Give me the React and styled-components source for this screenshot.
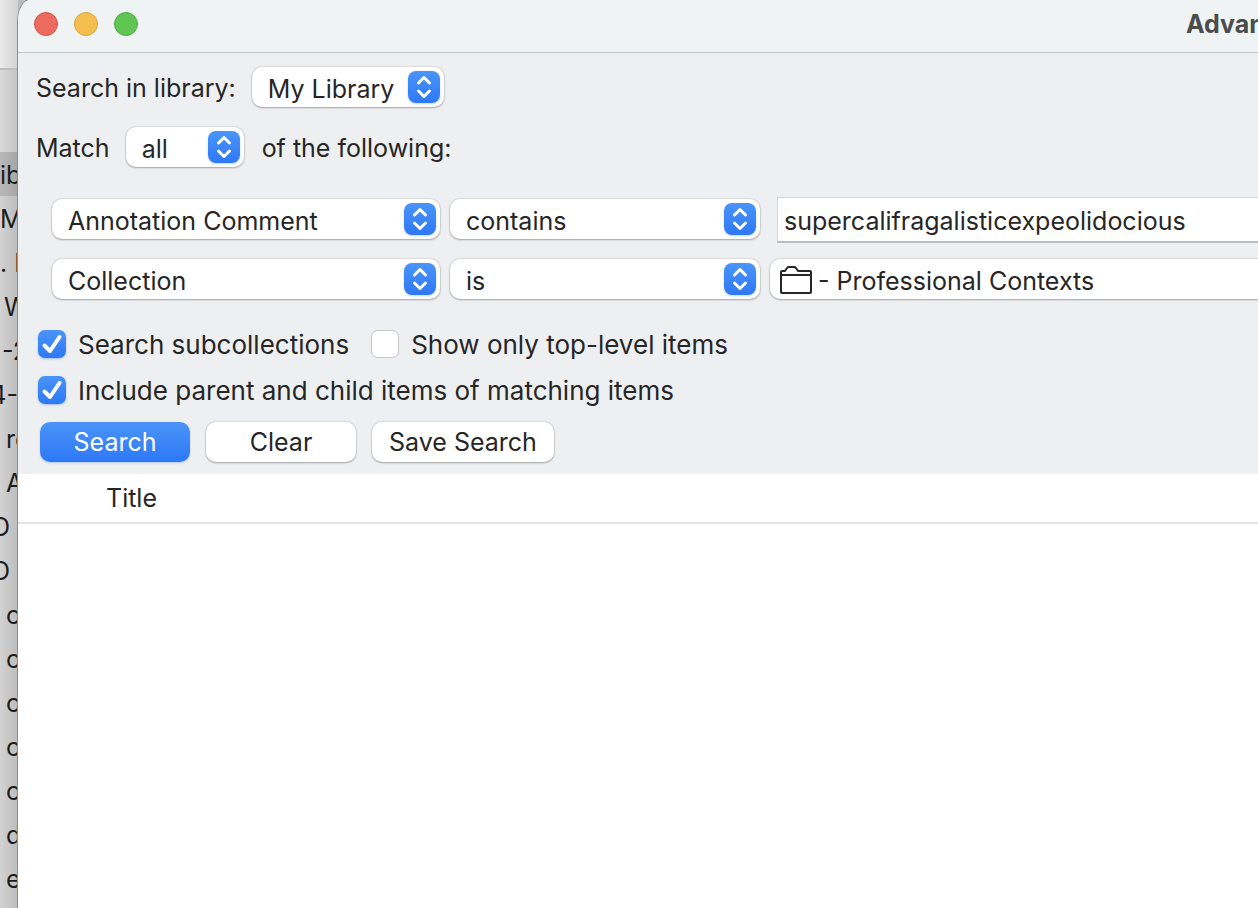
import React, {useState} from 'react'
import styled, {createGlobalStyle} from 'styled-components'

const backRows = [
    {text: 'ib', indent: 0, selected: true},
    {text: 'M', indent: 0},
    {text: '. I', indent: 0},
    {text: 'W', indent: 4},
    {text: '-2', indent: 2},
    {text: '4-', indent: 0, end: true},
    {text: 're', indent: 6},
    {text: 'A', indent: 6},
    {text: 'D', indent: 8, end: true},
    {text: 'D', indent: 8, end: true},
    {text: 'c', indent: 6},
    {text: 'c', indent: 6},
    {text: 'c', indent: 6},
    {text: 'c', indent: 6},
    {text: 'c', indent: 6},
    {text: 'd', indent: 6},
    {text: 'e', indent: 6},
]

const Popup = ({label, options, width, icon, cut}) => (
    <PopupTag $width={width}>
        <PopupSelect aria-label={label} $icon={Boolean(icon)} $cut={cut}>
            {options.map(option => <option key={option}>{option}</option>)}
        </PopupSelect>
        {icon}
        {!cut && (
            <Stepper>
                <svg width="32" height="32" viewBox="0 0 32 32" fill="none" stroke="#fff"
                     strokeWidth="3" strokeLinecap="round" strokeLinejoin="round">
                    <path d="M10.500 12L16 6.500L21.500 12M10.500 20L16 25.500L21.500 20"/>
                </svg>
            </Stepper>
        )}
    </PopupTag>
)

const Folder = () => (
    <FolderTag>
        <svg width="32" height="28" viewBox="0 0 32 28" fill="none" stroke="#262626"
             strokeWidth="2" strokeLinejoin="round">
            <path d="M1 9V6Q1 5 2 5H5L7 2Q7.600 1 9 1H14Q15.400 1 16 2L18 5H30Q31 5 31 6V26Q31 27 30 27H2Q1 27 1 26V9H31"/>
        </svg>
    </FolderTag>
)

const Check = ({label, initial}) => {
    const [checked, setChecked] = useState(initial)
    return (
        <CheckLabel>
            <CheckCell>
                <CheckInput
                    type="checkbox"
                    checked={checked}
                    onChange={e => setChecked(e.target.checked)}
                />
                {checked && (
                    <Tick width="28" height="28" viewBox="0 0 28 28" fill="none" stroke="#fff"
                          strokeWidth="4" strokeLinecap="round" strokeLinejoin="round">
                        <path d="M6.500 15.500L12 21L21.500 7"/>
                    </Tick>
                )}
            </CheckCell>
            <Text>{label}</Text>
        </CheckLabel>
    )
}

const App = () => {
    const [value, setValue] = useState('supercalifragalisticexpeolidocious')
    return (
        <Desktop>
            <GlobalStyle/>
            <BackWindow>
                <BackToolbar/>
                <BackHeader/>
                {backRows.map((row, i) => (
                    <BackRow key={i} $indent={row.indent} $end={row.end} $selected={row.selected}>
                        {row.text}
                    </BackRow>
                ))}
            </BackWindow>
            <Dialog>
                <TitleBar>
                    <Lights>
                        <Light aria-label="Close" $color="#ed6a5e" $edge="#d5554a"/>
                        <Light aria-label="Minimize" $color="#f5bf4f" $edge="#dba23c"/>
                        <Light aria-label="Zoom" $color="#61c554" $edge="#50ac43"/>
                    </Lights>
                    <Title>Advanced Search</Title>
                </TitleBar>
                <Panel>
                    <Line>
                        <Text>Search in library:</Text>
                        <Popup label="Search in library" options={['My Library']} width="192px"/>
                    </Line>
                    <Line>
                        <Text>Match</Text>
                        <Popup label="Match" options={['all', 'any']} width="118px"/>
                        <Following>of the following:</Following>
                    </Line>
                    <Conditions>
                        <Popup label="Field" options={['Annotation Comment']}/>
                        <Popup label="Operator" options={['contains']}/>
                        <ValueInput
                            aria-label="Value"
                            value={value}
                            onChange={e => setValue(e.target.value)}
                        />
                        <Popup label="Field" options={['Collection']}/>
                        <Popup label="Operator" options={['is']}/>
                        <Popup label="Value" options={['- Professional Contexts']} icon={<Folder/>} cut/>
                    </Conditions>
                    <Checks>
                        <Check label="Search subcollections" initial/>
                        <Check label="Show only top-level items" initial={false}/>
                    </Checks>
                    <Checks>
                        <Check label="Include parent and child items of matching items" initial/>
                    </Checks>
                    <Buttons>
                        <Button $primary>Search</Button>
                        <Button>Clear</Button>
                        <Button>Save Search</Button>
                    </Buttons>
                </Panel>
                <Results>
                    <thead>
                        <tr>
                            <ResultsHead>Title</ResultsHead>
                        </tr>
                    </thead>
                </Results>
            </Dialog>
        </Desktop>
    )
}

const GlobalStyle = createGlobalStyle`
  body {
    margin: 0;
    color: #262626;
    font-family: Inter, "Liberation Sans", sans-serif;
    font-size: 25px;
    line-height: 32px;
  }

  * {
    box-sizing: border-box;
  }
`

const Desktop = styled.div`
  display: grid;
  grid-template-columns: 18px minmax(0, 1fr);
  height: 100vh;
  overflow: hidden;
  background: linear-gradient(to right, #d3d3d3, #bcbcbc 18px);
`

const BackWindow = styled.div`
  overflow: hidden;
  color: #1c1c1c;
`

const BackToolbar = styled.div`
  height: 70px;
  border-bottom: 2px solid #bdbdbd;
  background: linear-gradient(to right, #ebebeb, #d2d2d2);
`

const BackHeader = styled.div`
  height: 82px;
  background: linear-gradient(to right, #dadada, #c4c4c4);
`

const BackRow = styled.div`
  display: flex;
  align-items: center;
  justify-content: ${({$end}) => $end ? 'flex-end' : 'flex-start'};
  height: 44px;
  padding-top: 2px;
  padding-left: ${({$indent, $end}) => $end ? 0 : $indent}px;
  padding-right: ${({$indent, $end}) => $end ? $indent : 0}px;
  white-space: nowrap;
  background: ${({$selected}) => $selected ? 'linear-gradient(to right, #b9b9b9, #a6a6a6)' : 'transparent'};
`

const Dialog = styled.div`
  display: flex;
  flex-direction: column;
  overflow: hidden;
  background: #fff;
  border-top-left-radius: 12px 22px;
  box-shadow: 0 0 0 1px #8e8e8e;
`

const TitleBar = styled.div`
  display: flex;
  align-items: center;
  justify-content: space-between;
  height: 53px;
  flex-shrink: 0;
  padding: 0 0 4px 16px;
  background: #eff3f4;
  border-bottom: 1px solid #c3c6c7;
`

const Lights = styled.div`
  display: flex;
  gap: 16px;
`

const Light = styled.button`
  width: 24px;
  height: 24px;
  padding: 0;
  border: 1px solid ${({$edge}) => $edge};
  border-radius: 50%;
  background: ${({$color}) => $color};
`

const Title = styled.div`
  width: 72px;
  overflow: hidden;
  white-space: nowrap;
  color: #4b4c4c;
  font-weight: 700;
`

const Panel = styled.div`
  display: flex;
  flex-direction: column;
  padding: 14px 0 12px 18px;
  background: #eeeff1;
`

const Line = styled.div`
  display: flex;
  align-items: center;
  gap: 16px;
  height: 40px;
  margin-bottom: 20px;
`

const Text = styled.span`
  padding-top: 2px;
`

const Following = styled(Text)`
  padding-left: 2px;
`

const PopupTag = styled.div`
  display: grid;
  align-items: center;
  width: ${({$width}) => $width || 'auto'};

  > * {
    grid-area: 1 / 1;
  }
`

const PopupSelect = styled.select`
  appearance: none;
  width: 100%;
  height: 40px;
  padding: 4px 0 0 ${({$icon}) => $icon ? 48 : 16}px;
  border: 0;
  border-radius: ${({$cut}) => $cut ? '10px 0 0 10px' : '10px'};
  background: #fff;
  box-shadow: 0 0 1px 1px rgba(0, 0, 0, 0.08), 0 1px 2px rgba(0, 0, 0, 0.26);
  color: inherit;
  font: inherit;
`

const Stepper = styled.span`
  justify-self: end;
  height: 32px;
  margin-right: 4px;
  border-radius: 8px;
  background: linear-gradient(#4a94fa, #2e78f6);
  box-shadow: 0 1px 2px rgba(46, 120, 246, 0.3);
  pointer-events: none;

  svg {
    display: block;
  }
`

const FolderTag = styled.span`
  justify-self: start;
  padding: 2px 0 0 10px;
  pointer-events: none;

  svg {
    display: block;
  }
`

const Conditions = styled.div`
  display: grid;
  grid-template-columns: 388px 310px minmax(0, 1fr);
  grid-template-rows: 44px 44px;
  align-items: center;
  gap: 16px 10px;
  padding: 10px 0 0 16px;
`

const ValueInput = styled.input`
  align-self: start;
  height: 46px;
  margin-left: 7px;
  padding: 2px 0 0 6px;
  border: 1px solid #d4d5d7;
  border-right: 0;
  border-bottom: 2px solid #bcbdbf;
  border-radius: 0;
  background: #fff;
  color: inherit;
  font: inherit;
  outline: none;
`

const Checks = styled.div`
  display: flex;
  gap: 22px;
  height: 32px;
  margin-top: 14px;
  padding-left: 2px;
  font-size: 26px;

  ${Conditions} + & {
    margin-top: 27px;
  }
`

const CheckLabel = styled.label`
  display: flex;
  align-items: center;
  gap: 12px;
  white-space: nowrap;
`

const CheckCell = styled.span`
  display: grid;

  > * {
    grid-area: 1 / 1;
  }
`

const CheckInput = styled.input`
  appearance: none;
  width: 28px;
  height: 28px;
  margin: 0;
  border: 1px solid #c6c6c8;
  border-radius: 7px;
  background: #fff;

  &:checked {
    border: 0;
    background: linear-gradient(#4a94fa, #2e78f6);
    box-shadow: 0 1px 2px rgba(46, 120, 246, 0.4);
  }
`

const Tick = styled.svg`
  pointer-events: none;
`

const Buttons = styled.div`
  display: flex;
  gap: 16px;
  margin-top: 16px;
  padding-left: 4px;
`

const Button = styled.button`
  min-width: 150px;
  height: 40px;
  padding: 0 17px;
  border: 0;
  border-radius: 10px;
  background: ${({$primary}) => $primary ? 'linear-gradient(#4a94fa, #2e78f6)' : '#fff'};
  box-shadow: ${({$primary}) => $primary
    ? '0 1px 2px rgba(46, 120, 246, 0.3)'
    : '0 0 1px 1px rgba(0, 0, 0, 0.08), 0 1px 2px rgba(0, 0, 0, 0.26)'};
  color: ${({$primary}) => $primary ? '#fff' : 'inherit'};
  font: inherit;
`

const Results = styled.table`
  width: 100%;
  border-collapse: collapse;
`

const ResultsHead = styled.th`
  height: 49px;
  padding: 0 0 0 88px;
  border-bottom: 2px solid #e2e2e2;
  font-weight: 400;
  text-align: left;
`

export default App
